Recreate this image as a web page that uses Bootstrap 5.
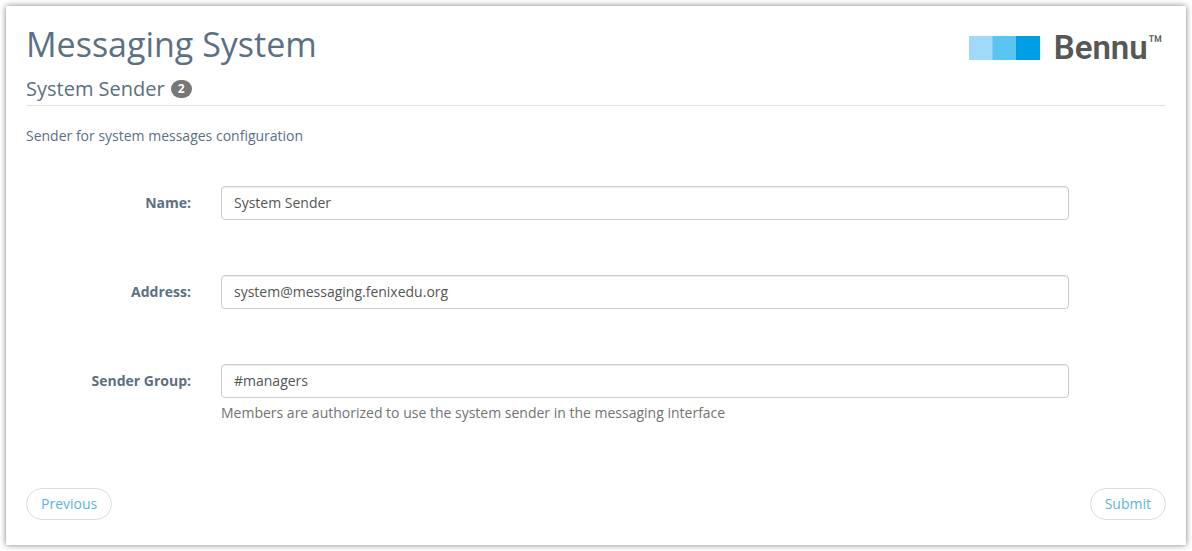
<!DOCTYPE html>
<html lang="en">
<head>
<meta charset="utf-8">
<meta name="viewport" content="width=device-width, initial-scale=1">
<title>Messaging System</title>
<link href="https://cdn.jsdelivr.net/npm/bootstrap@5.3.0/dist/css/bootstrap.min.css" rel="stylesheet">
<style>
  body { font-family: "Open Sans", "Noto Sans", sans-serif; font-size: 14px; line-height: 20px; color: #5b7083; background: #fff; padding: 6px; }
  .panel-sheet { background: #fff; padding: 20px 20px 25px; box-shadow: 0 0 6px rgba(0,0,0,.5); }
  h1 { font-size: 34px; line-height: 36px; font-weight: 400; margin: 0 0 14px; }
  h2 { font-size: 20px; line-height: 24px; font-weight: 400; }
  .title-line { gap: 6px; padding-top: 1px; padding-bottom: 4px; border-bottom: 1px solid #e2e2e2; margin-bottom: 20px; }
  .step-count { font-size: 12px; line-height: 12px; padding: 3px 7px; background: #777; border-radius: 10px; }
  .brand { gap: 14px; margin: 6px 2px 0 0; color: #575756; font-family: Roboto, sans-serif; }
  .brand-name { font-size: 33px; line-height: 32px; font-weight: 600; }
  .brand-mark { font-size: 26px; line-height: 26px; font-weight: 400; }
  .intro { margin-bottom: 40px; }
  .form-line { --bs-gutter-x: 30px; margin-bottom: 55px; }
  .form-line label { font-weight: 700; padding-top: 7px; padding-bottom: 7px; }
  .form-line .form-control { height: 34px; padding: 5px 12px 7px; font-size: 14px; line-height: 20px; color: #555; border: 1px solid #ccc; border-radius: 4px; box-shadow: inset 0 1px 1px rgba(0,0,0,.075); }
  .hint { color: #737373; margin: 5px 0 0; }
  .btn-round { --bs-btn-font-size: 14px; --bs-btn-line-height: 20px; --bs-btn-padding-x: 14px; --bs-btn-padding-y: 5px; --bs-btn-color: #5bb4e5; --bs-btn-border-color: #ddd; --bs-btn-bg: #fff; --bs-btn-hover-color: #2a91c8; --bs-btn-hover-border-color: #bbb; }
  .actions { padding-top: 10px; }
</style>
</head>
<body>
<main class="panel-sheet">
  <header class="d-flex justify-content-between align-items-start">
    <h1>Messaging System</h1>
    <div class="brand d-flex">
      <svg class="mt-1" width="71" height="24" viewBox="0 0 71 24" aria-hidden="true">
        <rect width="24" height="24" fill="#a1daf8"/>
        <rect x="23.5" width="24" height="24" fill="#5bc5f2"/>
        <rect x="47" width="24" height="24" fill="#009fe3"/>
      </svg>
      <div class="d-flex"><span class="brand-name">Bennu</span><span class="brand-mark">™</span></div>
    </div>
  </header>
  <div class="title-line d-flex align-items-center">
    <h2 class="mb-0">System Sender</h2>
    <span class="badge rounded-pill step-count">2</span>
  </div>
  <p class="intro">Sender for system messages configuration</p>
  <form>
    <div class="row form-line">
      <label class="col-2 text-end" for="name">Name:</label>
      <div class="col-9"><input class="form-control" type="text" id="name" value="System Sender"></div>
    </div>
    <div class="row form-line">
      <label class="col-2 text-end" for="address">Address:</label>
      <div class="col-9"><input class="form-control" type="text" id="address" value="system@messaging.fenixedu.org"></div>
    </div>
    <div class="row form-line">
      <label class="col-2 text-end" for="group">Sender Group:</label>
      <div class="col-9">
        <input class="form-control" type="text" id="group" value="#managers" aria-describedby="group-hint">
        <p class="hint" id="group-hint">Members are authorized to use the system sender in the messaging interface</p>
      </div>
    </div>
    <div class="actions d-flex justify-content-between">
      <button type="button" class="btn btn-round rounded-pill">Previous</button>
      <button type="submit" class="btn btn-round rounded-pill">Submit</button>
    </div>
  </form>
</main>
<script src="https://cdn.jsdelivr.net/npm/bootstrap@5.3.0/dist/js/bootstrap.bundle.min.js"></script>
</body>
</html>
